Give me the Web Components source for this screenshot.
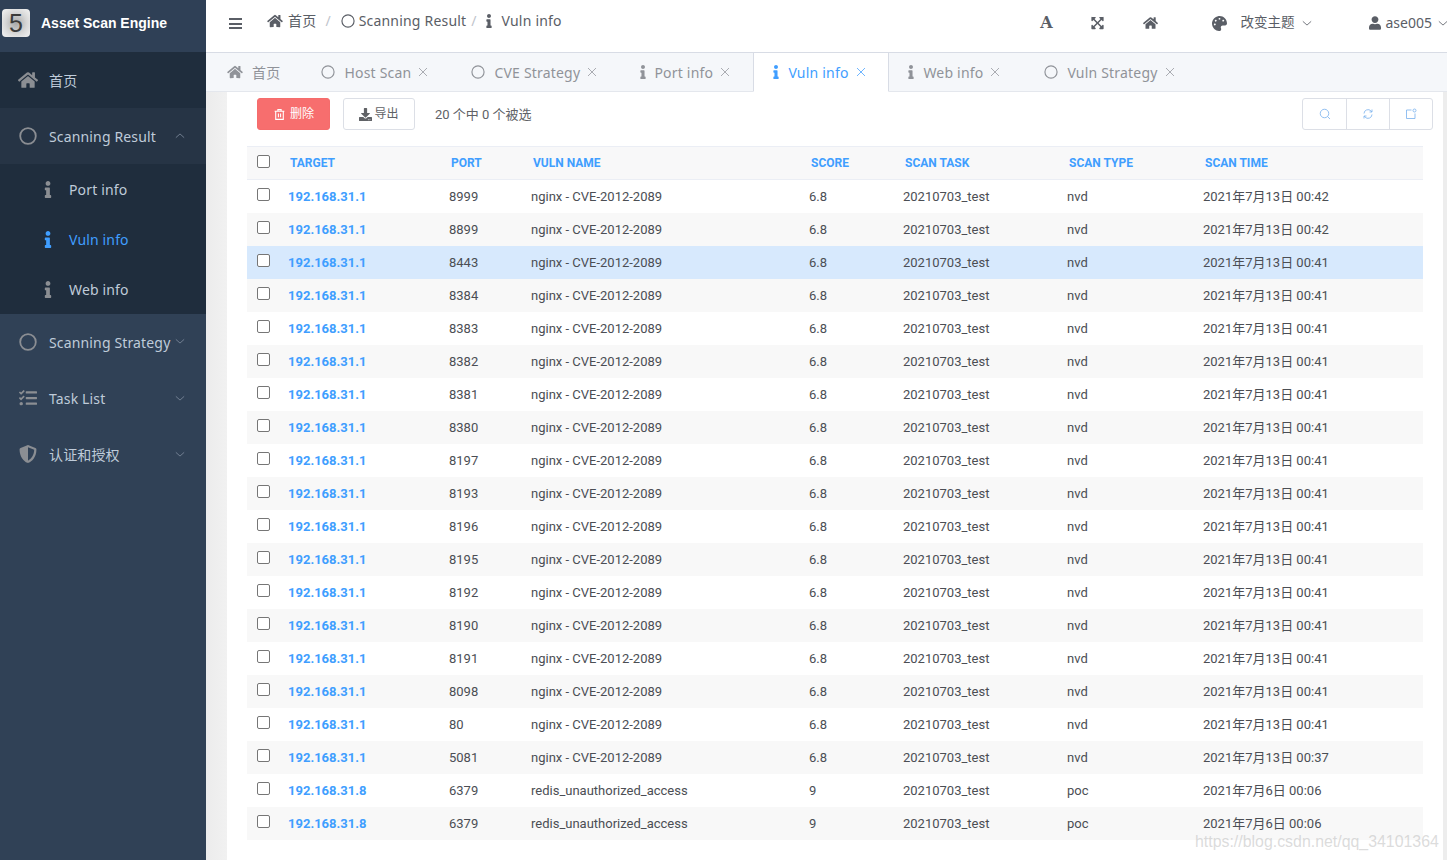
<!DOCTYPE html>
<html lang="zh">
<head>
<meta charset="utf-8">
<title>Vuln info</title>
<style>
  html,body{ margin:0; height:100%; overflow:hidden; background:#fff; }
  body{ font-family:"Noto Sans","Noto Sans CJK SC",sans-serif; }
</style>
</head>
<body>
<ase-app></ase-app>
<script>
(function () {
  // fill icons, solid glyphs in the source page
  const ICONS = {
    home: ['0 0 576 512','M280.37 148.26L96 300.11V464a16 16 0 0 0 16 16l112.06-.29a16 16 0 0 0 15.92-16V368a16 16 0 0 1 16-16h64a16 16 0 0 1 16 16v95.64a16 16 0 0 0 16 16.05L464 480a16 16 0 0 0 16-16V300L295.67 148.26a12.19 12.19 0 0 0-15.3 0zM571.6 251.47L488 182.56V44.05a12 12 0 0 0-12-12h-56a12 12 0 0 0-12 12v72.61L318.47 43a48 48 0 0 0-61 0L4.34 251.47a12 12 0 0 0-1.6 16.9l25.5 31A12 12 0 0 0 45.15 301l235.22-193.74a12.19 12.19 0 0 1 15.3 0L530.9 301a12 12 0 0 0 16.9-1.6l25.5-31a12 12 0 0 0-1.7-16.93z'],
    info: ['0 0 192 512','M20 424.229h20V279.771H20c-11.046 0-20-8.954-20-20V212c0-11.046 8.954-20 20-20h112c11.046 0 20 8.954 20 20v212.229h20c11.046 0 20 8.954 20 20V492c0 11.046-8.954 20-20 20H20c-11.046 0-20-8.954-20-20v-47.771c0-11.046 8.954-20 20-20zM96 0C56.235 0 24 32.235 24 72s32.235 72 72 72 72-32.235 72-72S135.764 0 96 0z'],
    tasks: ['0 0 512 512','M139.61 35.5a12 12 0 0 0-17 0L58.93 98.81l-22.7-22.12a12 12 0 0 0-17 0L3.53 92.41a12 12 0 0 0 0 17l47.59 47.4a12.78 12.78 0 0 0 17.61 0l15.59-15.62L156.52 69a12.09 12.09 0 0 0 .09-17zm0 159.19a12 12 0 0 0-17 0l-63.68 63.72-22.7-22.1a12 12 0 0 0-17 0L3.53 252a12 12 0 0 0 0 17L51 316.5a12.77 12.77 0 0 0 17.6 0l15.7-15.69 72.2-72.22a12 12 0 0 0 .09-16.9zM64 368c-26.49 0-48.59 21.5-48.59 48S37.53 464 64 464a48 48 0 0 0 0-96zm432 16H208a16 16 0 0 0-16 16v32a16 16 0 0 0 16 16h288a16 16 0 0 0 16-16v-32a16 16 0 0 0-16-16zm0-320H208a16 16 0 0 0-16 16v32a16 16 0 0 0 16 16h288a16 16 0 0 0 16-16V80a16 16 0 0 0-16-16zm0 160H208a16 16 0 0 0-16 16v32a16 16 0 0 0 16 16h288a16 16 0 0 0 16-16v-32a16 16 0 0 0-16-16z'],
    shield: ['0 0 512 512','M466.5 83.7l-192-80a48.15 48.15 0 0 0-36.9 0l-192 80C27.7 91.1 16 108.6 16 128c0 198.5 114.5 335.7 221.5 380.3 11.8 4.9 25.1 4.9 36.9 0C360.1 472.6 496 349.3 496 128c0-19.4-11.7-36.9-29.5-44.3zM256.1 446.3l-.1-381 175.9 73.3c-3.3 151.4-82.1 261.1-175.8 307.7z'],
    palette: ['0 0 512 512','M204.3 5C104.9 24.4 24.8 104.3 5.2 203.4c-37 187 131.7 326.4 258.8 306.7 41.2-6.4 61.4-54.6 42.5-91.7-23.1-45.4 9.9-98.4 60.9-98.4h79.7c35.8 0 64.8-29.6 64.9-65.3C511.5 97.1 368.1-26.9 204.3 5zM96 320c-17.7 0-32-14.3-32-32s14.3-32 32-32 32 14.3 32 32-14.3 32-32 32zm32-128c-17.7 0-32-14.3-32-32s14.3-32 32-32 32 14.3 32 32-14.3 32-32 32zm128-64c-17.7 0-32-14.3-32-32s14.3-32 32-32 32 14.3 32 32-14.3 32-32 32zm128 64c-17.7 0-32-14.3-32-32s14.3-32 32-32 32 14.3 32 32-14.3 32-32 32z'],
    expand: ['0 0 448 512','M448 344v112a23.94 23.94 0 0 1-24 24H312c-21.39 0-32.09-25.9-17-41l36.2-36.2L224 295.6 116.77 402.9 153 439c15.09 15.1 4.39 41-17 41H24a23.94 23.94 0 0 1-24-24V344c0-21.4 25.89-32.1 41-17l36.19 36.2L184.46 256 77.18 148.7 41 185c-15.1 15.1-41 4.4-41-17V56a23.94 23.94 0 0 1 24-24h112c21.39 0 32.09 25.9 17 41l-36.2 36.2L224 216.4l107.23-107.3L295 73c-15.09-15.1-4.39-41 17-41h112a23.94 23.94 0 0 1 24 24v112c0 21.4-25.89 32.1-41 17l-36.19-36.2L263.54 256l107.28 107.3L407 327.1c15.1-15.2 41-4.5 41 16.9z'],
    user: ['0 0 448 512','M224 256c70.7 0 128-57.3 128-128S294.7 0 224 0 96 57.3 96 128s57.3 128 128 128zm89.6 32h-16.7c-22.2 10.2-46.9 16-72.9 16s-50.6-5.8-72.9-16h-16.7C60.2 288 0 348.2 0 422.4V464c0 26.5 21.5 48 48 48h352c26.5 0 48-21.5 48-48v-41.6c0-74.2-60.2-134.4-134.4-134.4z'],
    download: ['0 0 512 512','M216 0h80c13.3 0 24 10.7 24 24v168h87.7c17.8 0 26.7 21.5 14.1 34.1L269.7 378.3c-7.5 7.5-19.8 7.5-27.3 0L90.1 226.1c-12.6-12.6-3.7-34.1 14.1-34.1H192V24c0-13.3 10.7-24 24-24zm296 376v112c0 13.3-10.7 24-24 24H24c-13.3 0-24-10.7-24-24V376c0-13.3 10.7-24 24-24h146.7l49 49c20.1 20.1 52.5 20.1 72.6 0l49-49H488c13.3 0 24 10.7 24 24zm-124 88c0-11-9-20-20-20s-20 9-20 20 9 20 20 20 20-9 20-20zm64 0c0-11-9-20-20-20s-20 9-20 20 9 20 20 20 20-9 20-20z']
  };
  // stroke icons on a 24 box
  const LINES = {
    circle: '<circle cx="12" cy="12" r="10.4"/>',
    down: '<path d="M2 8l10 9 10-9"/>',
    up: '<path d="M2 16l10-9 10 9"/>',
    close: '<path d="M4 4l16 16M20 4L4 20"/>',
    trash: '<path d="M3 6h18M9 6V3h6v3M5 6v15h14V6M10 10v7M14 10v7"/>',
    search: '<circle cx="11" cy="11" r="8.5"/><path d="M17 17l5 5"/>',
    refresh: '<path d="M4 11a8 8 0 0 1 14-5l2 2M20 13a8 8 0 0 1-14 5l-2-2"/><path d="M20 3v5h-5M4 21v-5h5"/>',
    columns: '<path d="M13 4H3v17h17V11"/><circle cx="19" cy="5" r="3"/>'
  };

  class AseIcon extends HTMLElement {
    connectedCallback(){
      const name = this.getAttribute('name');
      const sw = this.getAttribute('stroke') || '2';
      const root = this.attachShadow({ mode: 'open' });
      let svg;
      if (ICONS[name]) svg = `<svg viewBox="${ICONS[name][0]}" fill="currentColor"><path d="${ICONS[name][1]}"/></svg>`;
      else svg = `<svg viewBox="0 0 24 24" fill="none" stroke="currentColor" stroke-width="${sw}">${LINES[name] || ''}</svg>`;
      root.innerHTML = `<style>
        :host{ display:inline-flex; align-items:center; justify-content:center; flex:0 0 auto; line-height:0; }
        svg{ width:var(--w,14px); height:var(--h,14px); display:block; }
      </style>${svg}`;
    }
  }
  customElements.define('ase-icon', AseIcon);

  class AseLogo extends HTMLElement {
    constructor(){
      super();
      this.attachShadow({ mode: 'open' }).innerHTML = `<style>
        :host{ display:flex; align-items:center; height:52px; padding:0 0 6px 2px; gap:11px; box-sizing:border-box; background:#2f4056; }
        .mark{ width:28px; height:28px; border-radius:4px; display:grid; place-items:center;
          background:radial-gradient(circle at 50% 50%, #a8a8a8 0%, #d8d8d8 55%, #f4f4f4 100%);
          color:#3b3b3b; font:400 25px/1 "Liberation Sans",sans-serif; }
        .name{ font:700 14px/1 "Liberation Sans",sans-serif; color:#fff; }
      </style><div class="mark">5</div><div class="name"><slot></slot></div>`;
    }
  }
  customElements.define('ase-logo', AseLogo);

  class AseMenuItem extends HTMLElement {
    connectedCallback(){
      const icon = this.getAttribute('icon');
      const arrow = this.getAttribute('arrow');
      const w = icon === 'info' ? 8 : icon === 'home' ? 20 : 18;
      const h = icon === 'info' ? 17 : 18;
      const root = this.attachShadow({ mode: 'open' });
      root.innerHTML = `<style>
        :host{ display:flex; align-items:center; position:relative; box-sizing:border-box; height:56px;
          padding-left:17px; color:#bfcbd9; font:14px/1 var(--menu-font); letter-spacing:.15px; background:#304156; }
        :host([sub]){ height:50px; padding-left:43px; background:#1f2d3d; }
        :host([dark]){ background:#1f2d3d; }
        :host([open]){ background:#263445; }
        :host([active]){ color:#409eff; }
        .ic{ width:21px; display:flex; justify-content:center; color:#8b8e93; margin-right:11px; --w:${w}px; --h:${h}px; }
        :host([sub]) .ic{ width:9px; margin-right:17px; }
        :host([active]) .ic{ color:#409eff; }
        .arrow{ position:absolute; right:21px; top:21px; color:#7e8c9d; --w:10px; --h:10px; }
        :host([wide]) .arrow{ top:20px; }
        .t{ position:relative; top:1px; white-space:nowrap; }
      </style>
      <span class="ic"><ase-icon name="${icon}" stroke="2.4"></ase-icon></span>
      <span class="t"><slot></slot></span>
      ${arrow ? `<span class="arrow"><ase-icon name="${arrow}" stroke="2"></ase-icon></span>` : ''}`;
    }
  }
  customElements.define('ase-menu-item', AseMenuItem);

  class AseSidebar extends HTMLElement {
    constructor(){
      super();
      this.attachShadow({ mode: 'open' }).innerHTML = `<style>
        :host{ display:block; width:206px; flex:0 0 206px; height:100%; background:#304156; overflow:hidden;
          --menu-font:"Noto Sans","Noto Sans CJK SC",sans-serif; }
      </style>
      <ase-logo>Asset Scan Engine</ase-logo>
      <ase-menu-item icon="home" dark>首页</ase-menu-item>
      <ase-menu-item icon="circle" arrow="up" open>Scanning Result</ase-menu-item>
      <ase-menu-item icon="info" sub>Port info</ase-menu-item>
      <ase-menu-item icon="info" sub active>Vuln info</ase-menu-item>
      <ase-menu-item icon="info" sub>Web info</ase-menu-item>
      <ase-menu-item icon="circle" arrow="down" wide>Scanning Strategy</ase-menu-item>
      <ase-menu-item icon="tasks" arrow="down">Task List</ase-menu-item>
      <ase-menu-item icon="shield" arrow="down">认证和授权</ase-menu-item>`;
    }
  }
  customElements.define('ase-sidebar', AseSidebar);

  class AseCrumb extends HTMLElement {
    connectedCallback(){
      const icon = this.getAttribute('icon');
      const w = icon === 'info' ? 6 : icon === 'home' ? 16 : 14;
      this.attachShadow({ mode: 'open' }).innerHTML = `<style>
        :host{ display:inline-flex; align-items:center; gap:var(--crumb-gap,4px); color:#5a5e66; white-space:nowrap; letter-spacing:.2px; }
        ase-icon{ --w:${w}px; --h:14px; }
      </style><ase-icon name="${icon}" stroke="2"></ase-icon><span><slot></slot></span>`;
    }
  }
  customElements.define('ase-crumb', AseCrumb);

  class AseNavbar extends HTMLElement {
    constructor(){
      super();
      this.attachShadow({ mode: 'open' }).innerHTML = `<style>
        :host{ display:flex; align-items:flex-start; height:53px; box-sizing:border-box; background:#fff;
          border-bottom:1px solid #d8dce5; font:14px/1 "Noto Sans","Noto Sans CJK SC",sans-serif; color:#5a5e66; flex:0 0 auto; }
        .bars{ width:13px; margin:18px 0 0 23px; display:flex; flex-direction:column; gap:2.5px; }
        .bars i{ display:block; height:2px; background:#5a5e66; }
        .crumbs{ display:flex; align-items:center; margin:13px 0 0 25px; height:16px; }
        .sep{ color:#c0c4cc; margin:0 10px 0 9px; }
        .sep.b{ margin:0 9px 0 5px; }
        .right{ margin-left:auto; display:flex; align-items:center; height:46px; color:#5a5e66; }
        .a{ display:block; font:700 16px/1 "DejaVu Serif",serif; width:14px; text-align:center; margin-right:37px; }
        .exp{ --w:13px; --h:14px; margin-right:39px; }
        .hm{ --w:15px; --h:14px; margin-right:54px; }
        .pal{ --w:15px; --h:15px; margin-right:14px; }
        .theme{ font-size:13.5px; margin-right:7px; }
        .dn{ --w:10px; --h:10px; color:#5a5e66; }
        .usr{ --w:12px; --h:14px; margin:0 5px 0 57px; }
        .name{ margin-right:6px; }
        .last{ margin-right:-1px; }
      </style>
      <div class="bars"><i></i><i></i><i></i></div>
      <div class="crumbs">
        <ase-crumb icon="home" style="--crumb-gap:5px">首页</ase-crumb><span class="sep">/</span>
        <ase-crumb icon="circle">Scanning Result</ase-crumb><span class="sep b">/</span>
        <ase-crumb icon="info" style="--crumb-gap:10px">Vuln info</ase-crumb>
      </div>
      <div class="right">
        <span class="a">A</span>
        <ase-icon class="exp" name="expand"></ase-icon>
        <ase-icon class="hm" name="home"></ase-icon>
        <ase-icon class="pal" name="palette"></ase-icon>
        <span class="theme">改变主题</span>
        <ase-icon class="dn" name="down" stroke="2"></ase-icon>
        <ase-icon class="usr" name="user"></ase-icon>
        <span class="name">ase005</span>
        <ase-icon class="dn last" name="down" stroke="2"></ase-icon>
      </div>`;
    }
  }
  customElements.define('ase-navbar', AseNavbar);

  class AseTab extends HTMLElement {
    connectedCallback(){
      const icon = this.getAttribute('icon');
      const w = icon === 'info' ? 6 : icon === 'home' ? 16 : 14;
      const closable = !this.hasAttribute('fixed');
      this.attachShadow({ mode: 'open' }).innerHTML = `<style>
        :host{ display:flex; align-items:center; box-sizing:border-box; height:39px; color:#909399;
          border-bottom:1px solid #e4e7ed; white-space:nowrap; letter-spacing:.2px; }
        :host([active]){ color:#409eff; background:#fff; border:1px solid #d8dce5; border-top:0; border-bottom:1px solid #fff; }
        .ic{ --w:${w}px; --h:14px; display:flex; color:#909399; }
        :host([active]) .ic{ color:#409eff; }
        .x{ --w:12px; --h:12px; margin-left:6px; }
        .g{ margin-left:var(--gap,9px); position:relative; top:1px; }
      </style>
      <span class="ic"><ase-icon name="${icon}" stroke="2"></ase-icon></span>
      <span class="g"><slot></slot></span>
      ${closable ? '<ase-icon class="x" name="close" stroke="1.5"></ase-icon>' : ''}`;
    }
  }
  customElements.define('ase-tab', AseTab);

  class AseTabs extends HTMLElement {
    constructor(){
      super();
      this.attachShadow({ mode: 'open' }).innerHTML = `<style>
        :host{ display:flex; height:39px; box-sizing:border-box; background:#f5f7fa;
          font:14px/1 "Noto Sans","Noto Sans CJK SC",sans-serif; flex:0 0 auto; }
        .fill{ flex:1; border-bottom:1px solid #e4e7ed; }
      </style><slot></slot><div class="fill"></div>`;
    }
  }
  customElements.define('ase-tabs', AseTabs);

  class AseButton extends HTMLElement {
    connectedCallback(){
      const icon = this.getAttribute('icon');
      this.attachShadow({ mode: 'open' }).innerHTML = `<style>
        :host{ display:inline-flex; align-items:center; justify-content:center; box-sizing:border-box; height:32px;
          border-radius:3px; border:1px solid #dcdfe6; background:#fff; color:#606266; font-size:12px; gap:var(--btn-gap,2px); }
        :host([danger]){ border-color:#f56c6c; background:#f76e6e; color:#fff; }
        ase-icon{ --w:13px; --h:13px; }
      </style><ase-icon name="${icon}" stroke="2"></ase-icon><span><slot></slot></span>`;
    }
  }
  customElements.define('ase-button', AseButton);

  class AseToolbar extends HTMLElement {
    constructor(){
      super();
      this.attachShadow({ mode: 'open' }).innerHTML = `<style>
        :host{ display:flex; align-items:center; height:32px; font:12px/1 "Noto Sans","Noto Sans CJK SC",sans-serif; margin:6px 10px 0 30px; }
        .del{ width:73px; --btn-gap:4px; }
        .exp{ width:72px; margin-left:13px; }
        .count{ margin-left:20px; color:#606266; font:13px/1 Roboto,"Noto Sans CJK SC",sans-serif; }
        .tools{ margin-left:auto; display:flex; height:32px; box-sizing:border-box; border:1px solid #dcdfe6; border-radius:3px; }
        .tools span{ width:43px; box-sizing:border-box; display:grid; place-items:center; color:#7fb5ef; border-left:1px solid #dcdfe6; --w:12px; --h:12px; }
        .tools span:first-child{ border-left:0; }
      </style>
      <ase-button class="del" icon="trash" danger>删除</ase-button>
      <ase-button class="exp" icon="download">导出</ase-button>
      <span class="count">20 个中 0 个被选</span>
      <div class="tools">
        <span><ase-icon name="search" stroke="1.7"></ase-icon></span>
        <span><ase-icon name="refresh" stroke="1.7"></ase-icon></span>
        <span><ase-icon name="columns" stroke="1.7"></ase-icon></span>
      </div>`;
    }
  }
  customElements.define('ase-toolbar', AseToolbar);

  const PORTS = [
    ['8999','00:42'],['8899','00:42'],['8443','00:41'],['8384','00:41'],['8383','00:41'],['8382','00:41'],['8381','00:41'],
    ['8380','00:41'],['8197','00:41'],['8193','00:41'],['8196','00:41'],['8195','00:41'],['8192','00:41'],['8190','00:41'],
    ['8191','00:41'],['8098','00:41'],['80','00:41'],['5081','00:37']
  ];
  const ROWS = PORTS.map(p => ['192.168.31.1', p[0], 'nginx - CVE-2012-2089', '6.8', '20210703_test', 'nvd', '2021年7月13日 ' + p[1]]);
  ROWS.push(['192.168.31.8','6379','redis_unauthorized_access','9','20210703_test','poc','2021年7月6日 00:06']);
  ROWS.push(['192.168.31.8','6379','redis_unauthorized_access','9','20210703_test','poc','2021年7月6日 00:06']);

  class AseVulnTable extends HTMLElement {
    constructor(){
      super();
      const heads = ['TARGET','PORT','VULN NAME','SCORE','SCAN TASK','SCAN TYPE','SCAN TIME'];
      const rowHtml = ROWS.map((r, i) => `<div class="r ${i === 2 ? 'hl' : i % 2 ? 'alt' : ''}">
        <span class="c0"><i class="cb"></i></span>
        ${r.map((v, j) => `<span class="${j === 0 ? 'ip' : ''}">${v}</span>`).join('')}
      </div>`).join('');
      this.attachShadow({ mode: 'open' }).innerHTML = `<style>
        :host{ display:block; margin:16px 20px 0 20px; font:13px/1 Roboto,"Noto Sans CJK SC",sans-serif; color:#4b4e54; }
        .h,.r{ display:grid; grid-template-columns:41px 161px 82px 278px 94px 164px 136px 1fr; align-items:center; }
        .h{ height:34px; background:#f8f8f9; border-top:1px solid #ebeef5; border-bottom:1px solid #ebeef5; box-sizing:border-box;
          color:#409eff; font-size:12px; font-weight:700; }
        .h span:not(.c0){ padding-left:2px; }
        .r{ height:33px; }
        .r.alt{ background:#f8f8f8; }
        .r.hl{ background:#d7e9fd; }
        .c0{ padding-left:10px; display:flex; }
        .cb{ display:block; width:13px; height:13px; box-sizing:border-box; border:1px solid #767676; border-radius:2px; background:#fff; position:relative; top:-2px; }
        .ip{ color:#409eff; font-weight:700; }
      </style>
      <div class="h"><span class="c0"><i class="cb"></i></span>${heads.map(h => `<span>${h}</span>`).join('')}</div>
      ${rowHtml}`;
    }
  }
  customElements.define('ase-vuln-table', AseVulnTable);

  class AseApp extends HTMLElement {
    constructor(){
      super();
      this.attachShadow({ mode: 'open' }).innerHTML = `<style>
        :host{ display:flex; width:1447px; height:860px; overflow:hidden; position:relative; }
        .main{ flex:1; min-width:0; display:flex; flex-direction:column; }
        .gray{ flex:1; min-height:0; display:flex; background:linear-gradient(90deg,#ececec 0,#f1f1f1 21px,#ededed 21px); padding:0 4px 0 21px; }
        .card{ flex:1; min-width:0; background:#fff; }
        .mark{ position:absolute; left:1195px; top:834px; font:15.9px/1 "Liberation Sans",sans-serif; color:rgba(190,190,190,.55); white-space:nowrap; }
      </style>
      <ase-sidebar></ase-sidebar>
      <div class="main">
        <ase-navbar></ase-navbar>
        <ase-tabs>
          <ase-tab icon="home" fixed style="padding:0 41px 0 21px;--gap:9px">首页</ase-tab>
          <ase-tab icon="circle" style="width:150px">Host Scan</ase-tab>
          <ase-tab icon="circle" style="width:169px">CVE Strategy</ase-tab>
          <ase-tab icon="info" style="width:113px;--gap:8px">Port info</ase-tab>
          <ase-tab icon="info" active style="padding-left:19px;width:136px">Vuln info</ase-tab>
          <ase-tab icon="info" style="padding-left:19px;width:155px">Web info</ase-tab>
          <ase-tab icon="circle">Vuln Strategy</ase-tab>
        </ase-tabs>
        <div class="gray"><div class="card">
          <ase-toolbar></ase-toolbar>
          <ase-vuln-table></ase-vuln-table>
        </div></div>
      </div>
      <div class="mark">https://blog.csdn.net/qq_34101364</div>`;
    }
  }
  customElements.define('ase-app', AseApp);
})();
</script>
</body>
</html>
